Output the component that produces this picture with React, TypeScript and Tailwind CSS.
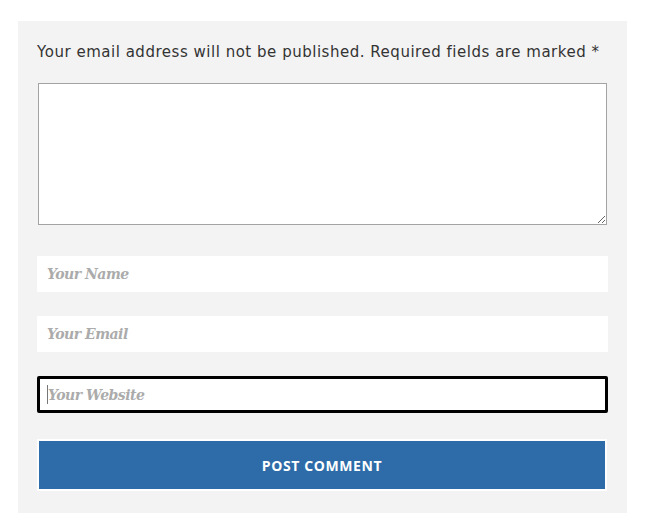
export default function App() {
  const field =
    "block w-full bg-white font-['DejaVu_Serif',serif] text-[14px] tracking-[-0.5px] text-[#333] outline-none placeholder:font-bold placeholder:italic placeholder:text-[#ababab]";

  return (
    <main className="min-h-[513px] bg-white pt-[21px] pl-[18px]">
      <section className="w-[609px] bg-[#f3f3f3] px-[19px] pt-[19px] pb-[22px]">
        <p className="font-['DejaVu_Sans',sans-serif] text-[15px] leading-[24px] tracking-[0.52px] text-[#333]">
          Your email address will not be published. Required fields are marked *
        </p>

        <textarea className="mt-[19px] ml-[1px] block h-[142px] w-[569px] border border-[#a3a3a3] bg-white outline-none" />

        <div className="mt-[31px] grid gap-[24px]">
          <input className={`${field} h-[36px] px-[10px]`} placeholder="Your Name" />
          <input className={`${field} h-[36px] px-[10px]`} placeholder="Your Email" />
          <div className="relative">
            <input
              className={`${field} h-[37px] rounded-[2px] border-[3px] border-black px-[8px]`}
              placeholder="Your Website"
            />
            <span className="absolute top-[9px] left-[10px] h-[19px] w-px bg-[#777]" />
          </div>
        </div>

        <button className="mt-[26px] block h-[52px] w-[570px] border-2 border-white bg-[#2d6ca8] font-['Open_Sans',sans-serif] text-[14px] font-bold tracking-[0.6px] text-white">
          POST COMMENT
        </button>
      </section>
    </main>
  );
}
